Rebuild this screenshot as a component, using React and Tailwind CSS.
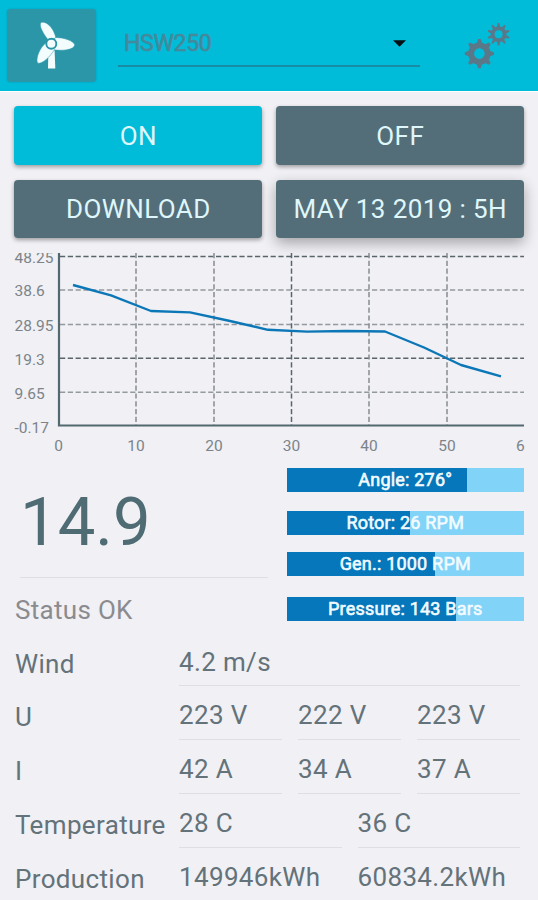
const buttons = [
  { label: 'ON', className: 'bg-[#00bcd8] shadow-[0_2px_4px_rgba(0,0,0,0.35)]' },
  { label: 'OFF', className: 'bg-[#546e79] shadow-[0_2px_4px_rgba(0,0,0,0.35)]' },
  { label: 'DOWNLOAD', className: 'bg-[#546e79] shadow-[0_2px_4px_rgba(0,0,0,0.35)]' },
  { label: 'MAY 13 2019 : 5H', className: 'bg-[#546e79] shadow-[0_5px_14px_rgba(0,0,0,0.32)]' },
];

const yTicks = [
  { label: '48.25', y: 256.5, dark: true },
  { label: '38.6', y: 290, dark: false },
  { label: '28.95', y: 324.5, dark: false },
  { label: '19.3', y: 358.3, dark: true },
  { label: '9.65', y: 392.3, dark: false },
  { label: '-0.17', y: 426.5, dark: false },
];

const xTicks = [
  { label: '0', x: 58.5 },
  { label: '10', x: 136 },
  { label: '20', x: 214 },
  { label: '30', x: 291.5, dark: true },
  { label: '40', x: 369 },
  { label: '50', x: 447 },
];

const power = [
  [73, 285], [111, 295.3], [151, 311], [190, 312.4], [230, 321], [268, 329.8],
  [307, 331.6], [346, 331], [385, 331.5], [424, 347.5], [461, 365], [501, 376.3],
];

const gauges = [
  { label: 'Angle: 276°', percent: 76, className: 'mb-[19px]' },
  { label: 'Rotor: 26 RPM', percent: 52, className: 'mb-[17px]' },
  { label: 'Gen.: 1000 RPM', percent: 62.5, className: 'mb-[21px]' },
  { label: 'Pressure: 143 Bars', percent: 71.4, className: '' },
];

const readings = [
  { label: 'Wind', values: ['4.2 m/s'] },
  { label: 'U', values: ['223 V', '222 V', '223 V'] },
  { label: 'I', values: ['42 A', '34 A', '37 A'] },
  { label: 'Temperature', values: ['28 C', '36 C'] },
  { label: 'Production', values: ['149946kWh', '60834.2kWh'] },
];

function TurbineIcon() {
  return (
    <svg viewBox="0 0 40 48" className="ml-2 h-12 w-10" fill="#f4fdfe">
      <path d="M12.3 32 L18.5 26 L19.3 46.5 H12 Z" />
      <g stroke="#2b96a8" strokeWidth="0.5">
        <path d="M12.5 18.5 C7.5 12 2.5 4 5 0.5 C9.5 -1.5 17.5 5 20 16 Z" />
        <path d="M19 15.5 C28 15.5 38 19 38.8 23 C37 28.3 27 28.8 17 27.8 Z" />
        <path d="M11 20 L18.5 27.5 C14 35 6 42.5 1.5 41 C-0.5 36 4 25 11 20 Z" />
      </g>
      <circle cx="15.3" cy="21.8" r="5" stroke="#2b96a8" strokeWidth="1.9" />
    </svg>
  );
}

function Gear({ cx, cy, r, hole, tooth, teeth }) {
  return (
    <g transform={`translate(${cx} ${cy})`}>
      <circle r={(r + hole) / 2} fill="none" stroke="#5b7889" strokeWidth={r - hole} />
      {Array.from({ length: teeth }, (_, i) => (
        <path
          key={i}
          d={`M${-tooth} ${-r + 1} L${-tooth * 0.45} ${-r - 3.4} H${tooth * 0.45} L${tooth} ${-r + 1} Z`}
          transform={`rotate(${(i * 360) / teeth})`}
          fill="#5b7889"
        />
      ))}
    </g>
  );
}

function SettingsIcon() {
  return (
    <svg viewBox="0 0 48 48" className="h-12 w-12">
      <Gear cx={16.4} cy={31.6} r={11.2} hole={5.3} tooth={2.8} teeth={8} />
      <Gear cx={35.6} cy={12.3} r={7.8} hole={4} tooth={1.8} teeth={10} />
    </svg>
  );
}

function Header() {
  return (
    <header className="flex h-[91px] shrink-0 items-start bg-[#00bcd9]">
      <div className="ml-[7px] mt-[9px] flex h-[73px] w-[89px] items-center justify-center rounded bg-[#2b96a8] shadow-[0_0_2px_rgba(20,110,130,0.5)]">
        <TurbineIcon />
      </div>
      <div className="ml-[22px] mt-[22px] flex h-[45px] w-[302px] items-center justify-between border-b-2 border-[#178ca4] pl-1.5 pr-3.5">
        <span className="pt-0.5 text-[23px] tracking-[-0.3px] text-[#44899c] [-webkit-text-stroke:0.6px_#44899c]">HSW250</span>
        <svg viewBox="0 0 14 7" className="h-[7px] w-[13px]">
          <path d="M0 0 H14 L7 7 Z" fill="#071114" />
        </svg>
      </div>
      <div className="ml-[43px] mt-[22px]">
        <SettingsIcon />
      </div>
    </header>
  );
}

function PowerChart() {
  return (
    <svg viewBox="0 253 538 208" className="block h-[208px] w-full shrink-0">
      {yTicks.slice(0, 5).map((t) => (
        <line key={t.label} x1="60" x2="524" y1={t.y} y2={t.y} stroke={t.dark ? '#5a646b' : '#94999e'} strokeWidth="1.5" strokeDasharray="5.2 2.6" />
      ))}
      {xTicks.slice(1).map((t) => (
        <line key={t.label} x1={t.x} x2={t.x} y1="253" y2="425" stroke={t.dark ? '#5a646b' : '#868c91'} strokeWidth="1.5" strokeDasharray="5.2 2.6" />
      ))}
      <path d="M59 253 V425.5 H524" fill="none" stroke="#526970" strokeWidth="2.2" />
      <polyline points={power.map((p) => p.join(',')).join(' ')} fill="none" stroke="#0c77b7" strokeWidth="2.4" strokeLinejoin="round" />
      <g fill="#7c8489" fontSize="15.5">
        {yTicks.map((t) => (
          <text key={t.label} x="14.5" y={t.y + 6.3}>{t.label}</text>
        ))}
        {xTicks.map((t) => (
          <text key={t.label} x={t.x} y="451.3" textAnchor="middle">{t.label}</text>
        ))}
        <text x="516" y="451.3">6</text>
      </g>
    </svg>
  );
}

function Gauge({ label, percent, className }) {
  return (
    <div className={`relative h-6 bg-[#82d3f8] ${className}`}>
      <div className="h-full bg-[#0577ba]" style={{ width: `${percent}%` }} />
      <span className="absolute inset-0 text-center text-[18px] leading-6 tracking-[0.2px] text-[#f2fbff] [-webkit-text-stroke:0.6px_#f2fbff]">
        {label}
      </span>
    </div>
  );
}

function ReadingRow({ label, values }) {
  return (
    <div className="flex h-[53.8px]">
      <div className="w-[164px] pt-[5px] text-[26px] leading-[53px] tracking-[0.35px] text-[#647279]">{label}</div>
      <div className="flex flex-1 gap-4">
        {values.map((value, i) => (
          <div key={i} className="flex-1 basis-0 border-b border-[#dedee3] pt-[2px] text-[26px] leading-[55px] tracking-[0.35px] text-[#647279]">
            {value}
          </div>
        ))}
      </div>
    </div>
  );
}

export default function App() {
  return (
    <div className="flex h-[900px] w-[538px] flex-col overflow-hidden bg-[#f0f0f5] font-['Roboto',sans-serif]">
      <Header />
      <div className="grid h-[162px] shrink-0 grid-cols-2 gap-x-3.5 gap-y-[15px] border-t border-white pb-[15px] pl-[14.4px] pr-[13.8px] pt-3.5">
        {buttons.map((b) => (
          <button key={b.label} className={`whitespace-nowrap rounded-[4px] pt-0.5 text-[26px] tracking-[0.4px] text-[#dff6fb] ${b.className}`}>
            {b.label}
          </button>
        ))}
      </div>
      <PowerChart />
      <div className="flex h-[171.5px] shrink-0 pl-[15px] pr-3.5">
        <div className="w-[253px]">
          <div className="ml-[5px] h-[117px] w-[248px] border-b border-[#dedee3] text-[67px] leading-[122px] text-[#4f6b73]">14.9</div>
          <div className="text-[26px] leading-[64px] tracking-[0.3px] text-[#8b8b8f]">Status OK</div>
        </div>
        <div className="ml-[18.5px] flex-1 pt-[7px]">
          {gauges.map((g) => (
            <Gauge key={g.label} {...g} />
          ))}
        </div>
      </div>
      <div className="pl-[15px] pr-[18px]">
        {readings.map((r) => (
          <ReadingRow key={r.label} {...r} />
        ))}
      </div>
    </div>
  );
}
